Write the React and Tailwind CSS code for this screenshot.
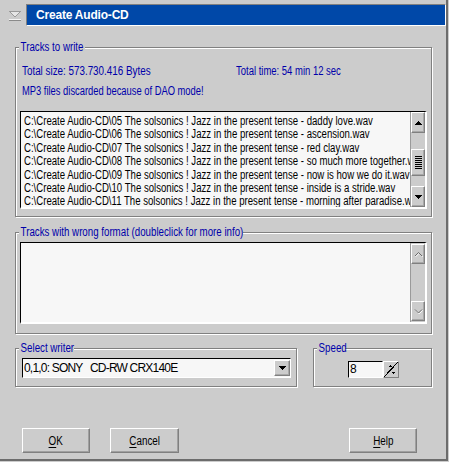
import React from 'react';

const SANS = "font-['Liberation_Sans',Arial,sans-serif]";
const RAISED = 'border border-t-white border-l-white border-r-[#808080] border-b-[#808080]';

const tracks = [
  'C:\\Create Audio-CD\\05 The solsonics ! Jazz in the present tense - daddy love.wav',
  'C:\\Create Audio-CD\\06 The solsonics ! Jazz in the present tense - ascension.wav',
  'C:\\Create Audio-CD\\07 The solsonics ! Jazz in the present tense - red clay.wav',
  'C:\\Create Audio-CD\\08 The solsonics ! Jazz in the present tense - so much more together.wav',
  'C:\\Create Audio-CD\\09 The solsonics ! Jazz in the present tense - now is how we do it.wav',
  'C:\\Create Audio-CD\\10 The solsonics ! Jazz in the present tense - inside is a stride.wav',
  'C:\\Create Audio-CD\\11 The solsonics ! Jazz in the present tense - morning after paradise.wav',
];

// condensed text: no narrow face is installed, so squeeze Liberation Sans
function Narrow({ children, className = 'scale-x-[0.82]' }) {
  return <span className={`inline-block origin-left whitespace-nowrap ${className}`}>{children}</span>;
}

function Arrow({ dir }) {
  return (
    <svg width="7" height="4" viewBox="0 0 7 4" shapeRendering="crispEdges">
      <polygon points={dir === 'up' ? '0,4 7,4 3.5,0' : '0,0 7,0 3.5,4'} fill="#000" />
    </svg>
  );
}

function Chevron({ dir }) {
  const pts = dir === 'up' ? '1,5 4.5,1.5 8,5' : '1,1.5 4.5,5 8,1.5';
  return (
    <svg width="9" height="7" viewBox="0 0 9 7">
      <polyline points={pts} fill="none" stroke="#ffffff" strokeWidth="1" transform="translate(0.6,0.8)" />
      <polyline points={pts} fill="none" stroke="#6a6a6a" strokeWidth="1" />
    </svg>
  );
}

function ScrollButton({ dir, className, disabled }) {
  return (
    <div className={`flex items-center justify-center bg-[#cccccc] ${RAISED} shadow-[inset_-1px_-1px_0_#a8a8a8] ${className}`}>
      {disabled ? <Chevron dir={dir} /> : <Arrow dir={dir} />}
    </div>
  );
}

function Group({ label, legendClass, className, children }) {
  return (
    <fieldset className={`border border-[#808080] shadow-[1px_1px_0_#ffffff,inset_1px_1px_0_#ffffff] ${className}`}>
      <legend className={`bg-[#cccccc] text-[#0000aa] text-[12px] leading-[12px] ${SANS} ${legendClass}`}>
        <Narrow className="pl-[2px] scale-x-[0.81]">{label}</Narrow>
      </legend>
      {children}
    </fieldset>
  );
}

function Button({ className, children }) {
  return (
    <div className={`h-[25px] flex items-center justify-center ${RAISED} shadow-[inset_-1px_-1px_0_#a0a0a0] text-black text-[12px] ${SANS} ${className}`}>
      <span className="inline-block scale-x-[0.82] whitespace-nowrap">{children}</span>
    </div>
  );
}

export default function App() {
  return (
    <div className="w-[449px] h-[462px] bg-[#cccccc] overflow-hidden">
      <div className="w-[448px] h-[461px] border-r-2 border-b-2 border-[#6c6c6c] flex flex-col">
        {/* Title bar */}
        <div className="flex h-[26px] shrink-0">
          <div className="w-[26px] pt-[10px] pl-[8px]">
            <svg width="14" height="11" viewBox="0 0 14 11" shapeRendering="crispEdges">
              <polygon points="1,1 13,1 7,7" fill="#e6e6e6" stroke="#9a9a9a" />
              <line x1="1" y1="9.5" x2="13" y2="9.5" stroke="#f4f4f4" />
              <line x1="1" y1="10.5" x2="13" y2="10.5" stroke="#8a8a8a" />
            </svg>
          </div>
          <div className="flex-1 mt-[4px] bg-[#0048a8] border border-t-[#808080] border-l-[#808080] border-r-white border-b-white flex items-center pl-[9px]">
            <span className={`text-white font-bold text-[12px] tracking-[-0.2px] ${SANS}`}>Create Audio-CD</span>
          </div>
        </div>

        {/* Tracks to write */}
        <Group label="Tracks to write" legendClass="ml-[3px] w-[66px]" className="mt-[15px] ml-[15px] w-[417px]">
          <div className={`flex pt-[12px] pl-[6px] text-[12px] leading-[13px] text-[#0000aa] ${SANS}`}>
            <div className="w-[214px]">
              <Narrow>Total size: 573.730.416 Bytes</Narrow>
            </div>
            <Narrow className="scale-x-[0.79]">Total time: 54 min 12 sec</Narrow>
          </div>
          <div className={`mt-[7px] pl-[6px] text-[12px] leading-[13px] text-[#0000aa] ${SANS}`}>
            <Narrow className="scale-x-[0.78]">MP3 files discarded because of DAO mode!</Narrow>
          </div>
          <div className="mt-[13px] mb-[7px] ml-[4px] w-[407px] h-[98px] border-t border-l border-r-2 border-b-2 border-t-black border-l-black border-r-white border-b-white flex">
            <div className="flex-1 bg-[#f7f7f7] overflow-hidden pt-[3px] pl-[3px]">
              <div className={`w-[500px] origin-top-left scale-x-[0.8] text-black text-[12px] leading-[13.4px] whitespace-nowrap ${SANS}`}>
                {tracks.map((t) => (
                  <div key={t}>{t}</div>
                ))}
              </div>
            </div>
            <div className="w-[15px] flex flex-col bg-[#cccccc] border-l border-l-[#9a9a9a]">
              <ScrollButton dir="up" className="h-[21px]" />
              <div className="h-[16px]" />
              <div className={`h-[27px] flex items-center justify-center bg-[#cccccc] ${RAISED} shadow-[inset_-1px_-1px_0_#a8a8a8]`}>
                <svg width="7" height="13" viewBox="0 0 7 13" shapeRendering="crispEdges">
                  {[0, 2, 4, 6, 8, 10, 12].map((y) => (
                    <line key={y} x1="0" y1={y + 0.5} x2="7" y2={y + 0.5} stroke="#000" />
                  ))}
                </svg>
              </div>
              <div className="flex-1" />
              <ScrollButton dir="down" className="h-[21px]" />
            </div>
          </div>
        </Group>

        {/* Tracks with wrong format */}
        <Group
          label="Tracks with wrong format (doubleclick for more info)"
          legendClass="ml-[3px] w-[224px]"
          className="mt-[9px] ml-[15px] w-[417px]"
        >
          <div className="mt-[4px] mb-[9px] ml-[4px] w-[407px] h-[82px] border-t border-l border-r-2 border-b-2 border-t-black border-l-black border-r-white border-b-white flex">
            <div className="flex-1 bg-[#f7f7f7]" />
            <div className="w-[15px] flex flex-col bg-[#cccccc] border-l border-l-[#9a9a9a] py-[1px]">
              <ScrollButton dir="up" disabled className="h-[20px]" />
              <div className="flex-1" />
              <ScrollButton dir="down" disabled className="h-[20px]" />
            </div>
          </div>
        </Group>

        {/* Writer and speed */}
        <div className="flex mt-[8px]">
          <Group label="Select writer" legendClass="ml-[3px] w-[55px]" className="ml-[15px] w-[282px]">
            <div className="mt-[4px] mb-[8px] ml-[6px] w-[269px] h-[20px] border border-t-black border-l-black border-r-white border-b-white bg-[#f7f7f7] flex items-center">
              <span className={`flex-1 pl-[1px] text-black text-[12px] tracking-[-0.8px] whitespace-pre ${SANS}`}>0,1,0: SONY   CD-RW CRX140E</span>
              <div className={`w-[16px] h-[16px] flex items-center justify-center bg-[#cccccc] ${RAISED} shadow-[inset_-1px_-1px_0_#a8a8a8]`}>
                <Arrow dir="down" />
              </div>
            </div>
          </Group>
          <Group label="Speed" legendClass="ml-[3px] w-[28px]" className="ml-[16px] w-[119px]">
            <div className="mt-[7px] mb-[8px] ml-[34px] flex h-[17px]">
              <div className={`w-[35px] border border-t-black border-l-black border-r-white border-b-white bg-[#f7f7f7] pl-[1px] text-black text-[12px] leading-[15px] ${SANS}`}>
                8
              </div>
              <div className={`w-[16px] bg-[#cccccc] ${RAISED}`}>
                <svg width="14" height="15" viewBox="0 0 14 15" shapeRendering="crispEdges">
                  <line x1="0" y1="15" x2="14" y2="0" stroke="#000" />
                  <polygon points="4,5 8,5 6,3" fill="#000" />
                  <polygon points="7,10 11,10 9,12" fill="#000" />
                </svg>
              </div>
            </div>
          </Group>
        </div>

        {/* Buttons */}
        <div className="flex mt-[41px]">
          <Button className="ml-[22px] w-[68px]">
            <span className="underline underline-offset-2">O</span>K
          </Button>
          <Button className="ml-[20px] w-[69px]">
            <span className="underline underline-offset-2">C</span>ancel
          </Button>
          <Button className="ml-[170px] w-[68px]">
            <span className="underline underline-offset-2">H</span>elp
          </Button>
        </div>
      </div>
    </div>
  );
}
